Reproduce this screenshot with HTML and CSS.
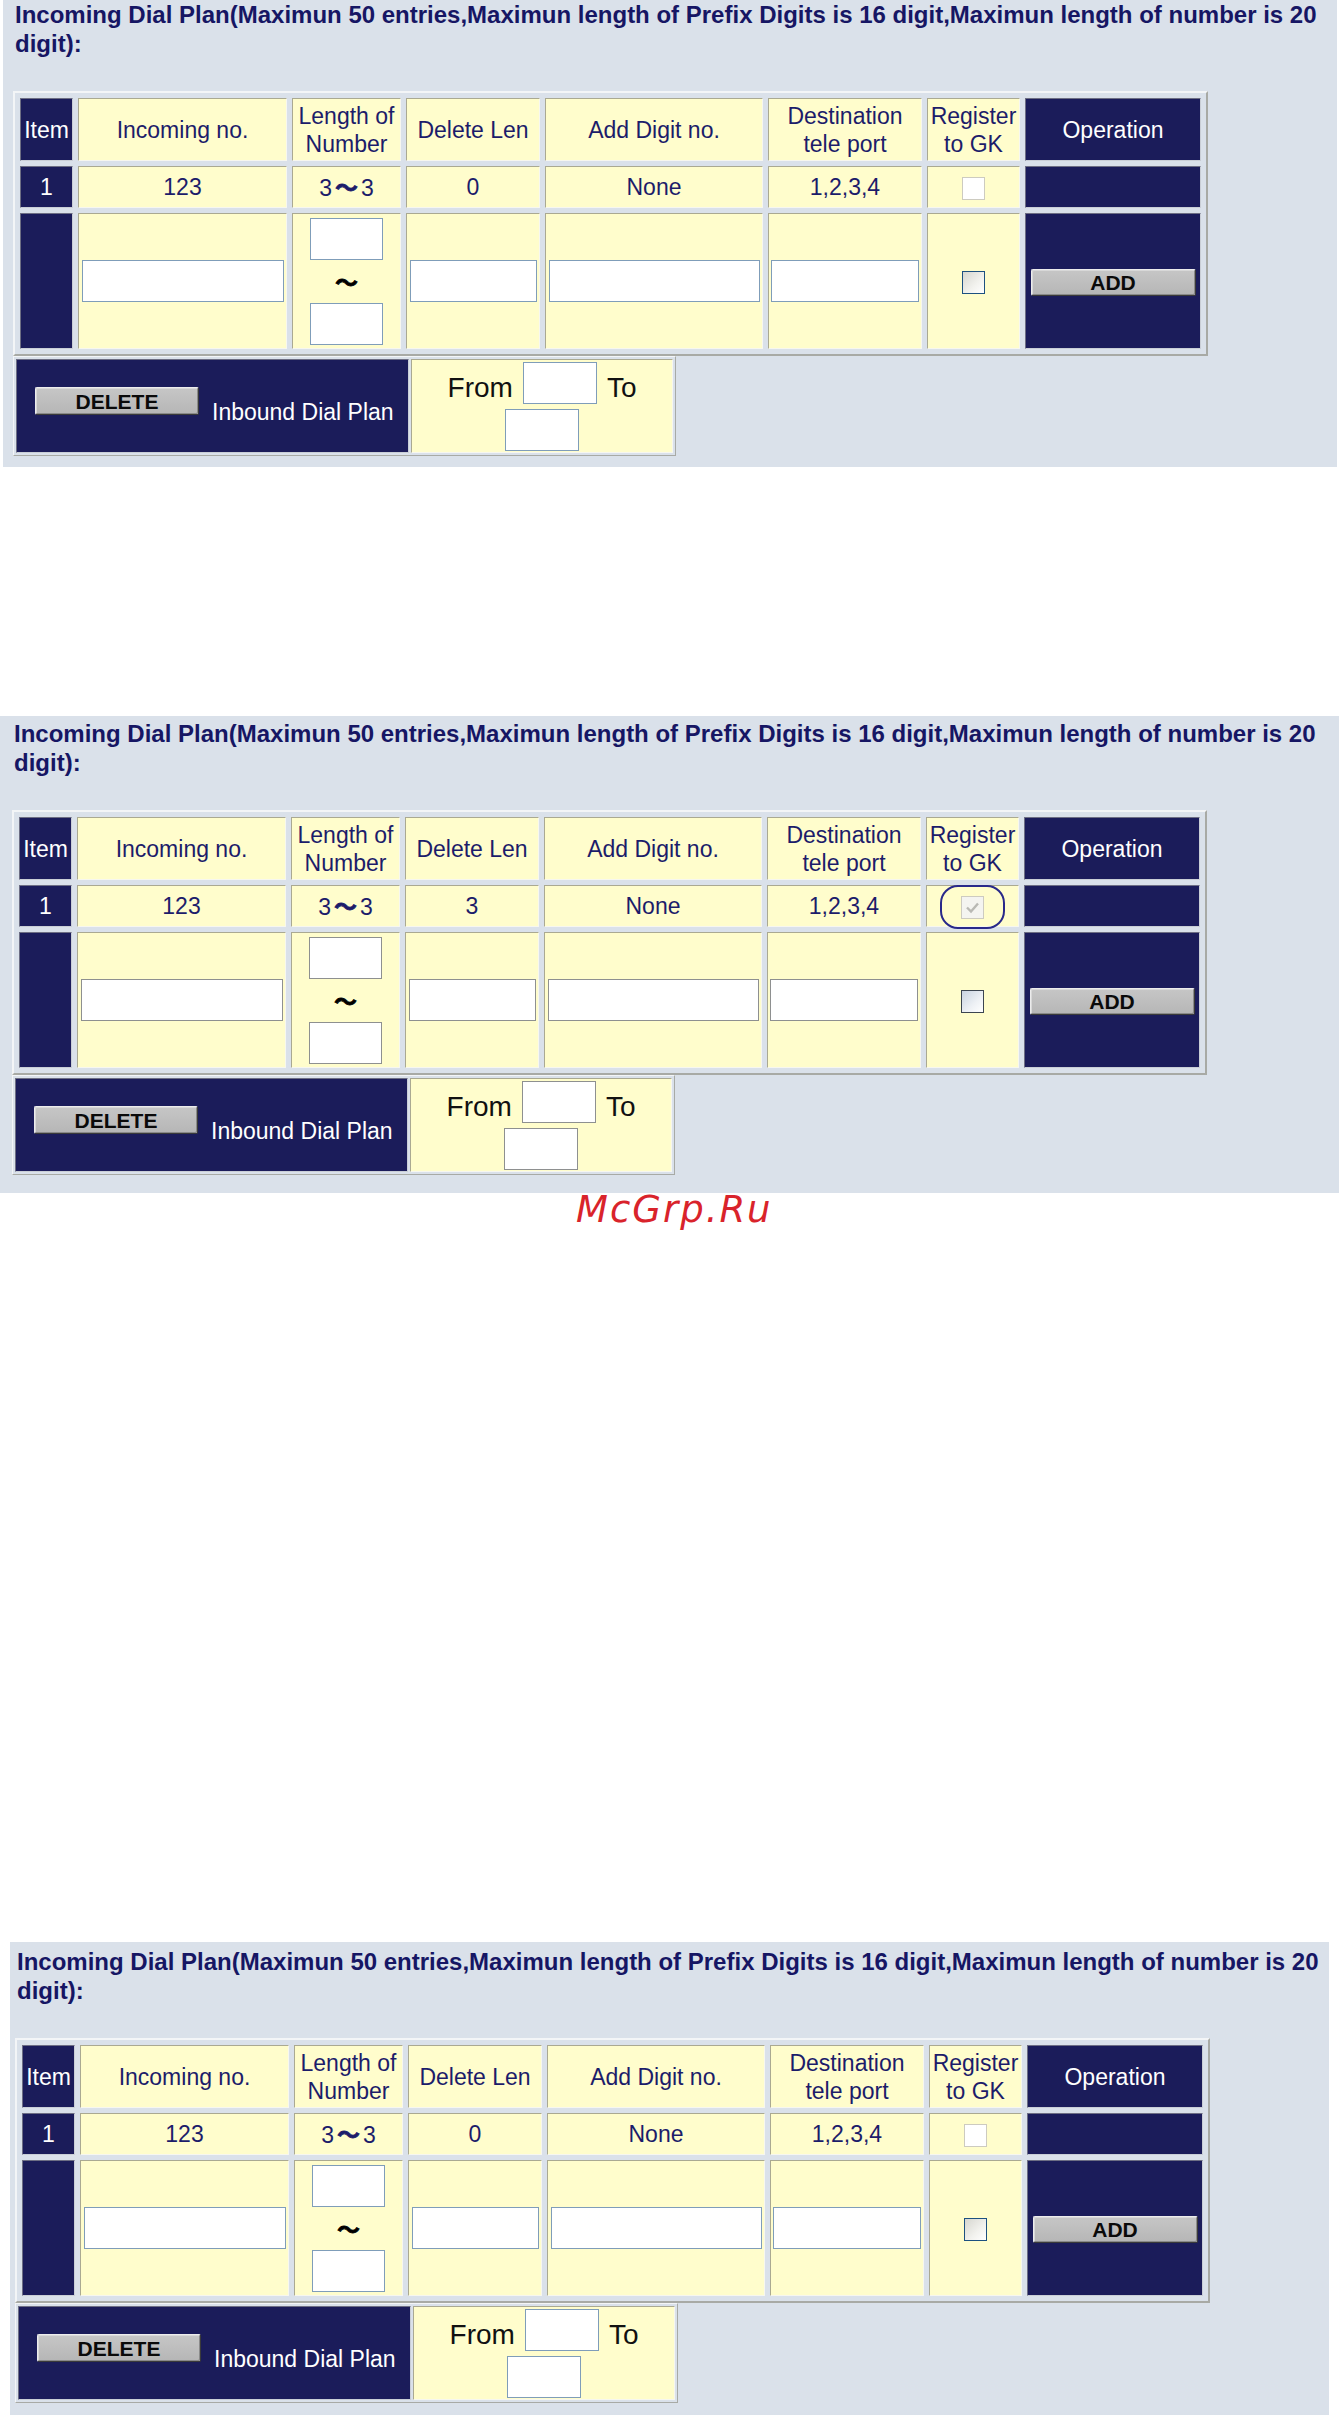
FILE: index.html
```html
<!DOCTYPE html>
<html lang="en">
<head>
<meta charset="utf-8">
<title>Incoming Dial Plan</title>
<link rel="stylesheet" href="styles.css">
</head>
<body>
<div class="page">

  <section class="panel panel--one">
    <h2 class="title">Incoming Dial Plan(Maximun 50 entries,Maximun length of Prefix Digits is 16 digit,Maximun length of number is 20<br>digit):</h2>
    <table class="plan">
      <tr class="row-head">
        <td class="cell cell--dark c-item">Item</td>
        <td class="cell c-in">Incoming no.</td>
        <td class="cell c-len">Length of Number</td>
        <td class="cell c-del">Delete Len</td>
        <td class="cell c-add">Add Digit no.</td>
        <td class="cell c-dst">Destination tele port</td>
        <td class="cell c-reg">Register to GK</td>
        <td class="cell cell--dark c-op">Operation</td>
      </tr>
      <tr class="row-entry">
        <td class="cell cell--dark">1</td>
        <td class="cell">123</td>
        <td class="cell">3<span class="wave">～</span>3</td>
        <td class="cell">0</td>
        <td class="cell">None</td>
        <td class="cell">1,2,3,4</td>
        <td class="cell"><span class="check check--off"></span></td>
        <td class="cell cell--dark"></td>
      </tr>
      <tr class="row-new">
        <td class="cell cell--dark"></td>
        <td class="cell"><input class="field field--in" type="text"></td>
        <td class="cell"><input class="field field--len" type="text"><div class="wave-sep">～</div><input class="field field--len" type="text"></td>
        <td class="cell"><input class="field field--del" type="text"></td>
        <td class="cell"><input class="field field--add" type="text"></td>
        <td class="cell"><input class="field field--dst" type="text"></td>
        <td class="cell"><span class="check check--new"></span></td>
        <td class="cell cell--dark"><button class="btn btn--add" type="button">ADD</button></td>
      </tr>
    </table>
    <table class="remove">
      <tr>
        <td class="cell cell--dark c-remove">
          <div class="remove-inner"><button class="btn btn--delete" type="button">DELETE</button><span class="remove-label">Inbound Dial Plan</span></div>
        </td>
        <td class="cell c-range">
          <div class="range-line"><span class="range-word">From</span><input class="field field--range" type="text"><span class="range-word">To</span></div>
          <div class="range-line range-line--second"><input class="field field--range" type="text"></div>
        </td>
      </tr>
    </table>
  </section>

  <section class="panel panel--two">
    <h2 class="title">Incoming Dial Plan(Maximun 50 entries,Maximun length of Prefix Digits is 16 digit,Maximun length of number is 20<br>digit):</h2>
    <table class="plan">
      <tr class="row-head">
        <td class="cell cell--dark c-item">Item</td>
        <td class="cell c-in">Incoming no.</td>
        <td class="cell c-len">Length of Number</td>
        <td class="cell c-del">Delete Len</td>
        <td class="cell c-add">Add Digit no.</td>
        <td class="cell c-dst">Destination tele port</td>
        <td class="cell c-reg">Register to GK</td>
        <td class="cell cell--dark c-op">Operation</td>
      </tr>
      <tr class="row-entry">
        <td class="cell cell--dark">1</td>
        <td class="cell">123</td>
        <td class="cell">3<span class="wave">～</span>3</td>
        <td class="cell">3</td>
        <td class="cell">None</td>
        <td class="cell">1,2,3,4</td>
        <td class="cell"><span class="ring"><span class="check check--on"><svg class="tick" viewBox="0 0 23 23" width="23" height="23"><path d="M6 11.5 L10 15.5 L17 7.5" fill="none" stroke="#b9b9b4" stroke-width="2.4"/></svg></span></span></td>
        <td class="cell cell--dark"></td>
      </tr>
      <tr class="row-new">
        <td class="cell cell--dark"></td>
        <td class="cell"><input class="field field--in" type="text"></td>
        <td class="cell"><input class="field field--len" type="text"><div class="wave-sep">～</div><input class="field field--len" type="text"></td>
        <td class="cell"><input class="field field--del" type="text"></td>
        <td class="cell"><input class="field field--add" type="text"></td>
        <td class="cell"><input class="field field--dst" type="text"></td>
        <td class="cell"><span class="check check--new"></span></td>
        <td class="cell cell--dark"><button class="btn btn--add" type="button">ADD</button></td>
      </tr>
    </table>
    <table class="remove">
      <tr>
        <td class="cell cell--dark c-remove">
          <div class="remove-inner"><button class="btn btn--delete" type="button">DELETE</button><span class="remove-label">Inbound Dial Plan</span></div>
        </td>
        <td class="cell c-range">
          <div class="range-line"><span class="range-word">From</span><input class="field field--range" type="text"><span class="range-word">To</span></div>
          <div class="range-line range-line--second"><input class="field field--range" type="text"></div>
        </td>
      </tr>
    </table>
  </section>

  <div class="watermark">McGrp.Ru</div>

  <section class="panel panel--three">
    <h2 class="title">Incoming Dial Plan(Maximun 50 entries,Maximun length of Prefix Digits is 16 digit,Maximun length of number is 20<br>digit):</h2>
    <table class="plan">
      <tr class="row-head">
        <td class="cell cell--dark c-item">Item</td>
        <td class="cell c-in">Incoming no.</td>
        <td class="cell c-len">Length of Number</td>
        <td class="cell c-del">Delete Len</td>
        <td class="cell c-add">Add Digit no.</td>
        <td class="cell c-dst">Destination tele port</td>
        <td class="cell c-reg">Register to GK</td>
        <td class="cell cell--dark c-op">Operation</td>
      </tr>
      <tr class="row-entry">
        <td class="cell cell--dark">1</td>
        <td class="cell">123</td>
        <td class="cell">3<span class="wave">～</span>3</td>
        <td class="cell">0</td>
        <td class="cell">None</td>
        <td class="cell">1,2,3,4</td>
        <td class="cell"><span class="check check--off"></span></td>
        <td class="cell cell--dark"></td>
      </tr>
      <tr class="row-new">
        <td class="cell cell--dark"></td>
        <td class="cell"><input class="field field--in" type="text"></td>
        <td class="cell"><input class="field field--len" type="text"><div class="wave-sep">～</div><input class="field field--len" type="text"></td>
        <td class="cell"><input class="field field--del" type="text"></td>
        <td class="cell"><input class="field field--add" type="text"></td>
        <td class="cell"><input class="field field--dst" type="text"></td>
        <td class="cell"><span class="check check--new"></span></td>
        <td class="cell cell--dark"><button class="btn btn--add" type="button">ADD</button></td>
      </tr>
    </table>
    <table class="remove">
      <tr>
        <td class="cell cell--dark c-remove">
          <div class="remove-inner"><button class="btn btn--delete" type="button">DELETE</button><span class="remove-label">Inbound Dial Plan</span></div>
        </td>
        <td class="cell c-range">
          <div class="range-line"><span class="range-word">From</span><input class="field field--range" type="text"><span class="range-word">To</span></div>
          <div class="range-line range-line--second"><input class="field field--range" type="text"></div>
        </td>
      </tr>
    </table>
  </section>

</div>
</body>
</html>
```

FILE: styles.css
```css
* {
  box-sizing: border-box;
}

html, body {
  margin: 0;
  padding: 0;
  background: #ffffff;
}

body {
  font-family: "Liberation Sans", Arial, sans-serif;
}

.page {
  width: 1339px;
}

/* ---------- panels ---------- */
.panel {
  background: #dae1ea;
  overflow: hidden;
}

.panel--one {
  margin-left: 3px;
  width: 1334px;
  height: 467px;
  padding: 0 0 0 10px;
}

.panel--two {
  margin-top: 249px;
  width: 1339px;
  height: 477px;
  padding: 3px 0 0 12px;
}

.panel--three {
  margin-top: 716px;
  margin-left: 10px;
  width: 1319px;
  height: 473px;
  padding: 5px 0 0 5px;
}

.title {
  margin: 0 0 33px 2px;
  font-size: 24px;
  line-height: 29px;
  font-weight: bold;
  color: #161664;
  white-space: nowrap;
}

/* ---------- tables ---------- */
.plan {
  border-collapse: separate;
  border-spacing: 5px;
  border: 2px solid;
  border-color: #f3f5f7 #a8aaa5 #a8aaa5 #f3f5f7;
  table-layout: fixed;
  width: 1195px;
  font-size: 23px;
  line-height: 28px;
  color: #1c1c6a;
}

.remove {
  border-collapse: separate;
  border-spacing: 2px;
  border: 1px solid;
  border-color: #f3f5f7 #a8aaa5 #a8aaa5 #f3f5f7;
  table-layout: fixed;
  width: 663px;
}

.cell {
  border: 1px solid;
  border-color: #aaa992 #f7f7ef #f7f7ef #aaa992;
  padding: 1px;
  text-align: center;
  vertical-align: middle;
  background: #fffdcc;
}

.cell--dark {
  background: #1b1c5a;
  color: #ffffff;
  border-color: #6d6e84 #c9ced6 #c9ced6 #6d6e84;
}

.c-item { width: 53px; }
.c-in   { width: 209px; }
.c-len  { width: 109px; }
.c-del  { width: 134px; }
.c-add  { width: 218px; }
.c-dst  { width: 154px; }
.c-reg  { width: 93px; }
.c-op   { width: 176px; }

.row-head .cell  { height: 63px; }
.row-entry .cell { height: 42px; }
.row-new .cell   { height: 136px; }

.wave {
  display: inline-block;
  margin: 0 3px;
  font-family: "Noto Sans CJK JP", "DejaVu Sans", sans-serif;
  font-weight: bold;
  font-size: 23px;
  -webkit-text-stroke: 0.8px currentColor;
}

.wave-sep {
  height: 43px;
  line-height: 43px;
  font-family: "Noto Sans CJK JP", "DejaVu Sans", sans-serif;
  font-weight: bold;
  font-size: 23px;
  color: #000000;
  -webkit-text-stroke: 0.8px currentColor;
}

/* ---------- inputs ---------- */
.field {
  display: inline-block;
  height: 42px;
  margin: 0;
  padding: 0;
  border: 1px solid #7f9db9;
  background: #ffffff;
  vertical-align: middle;
  font: 16px "Liberation Sans", Arial, sans-serif;
}

.panel--two .field {
  border-color: #8e9090;
}

.field--in    { width: 202px; }
.field--len   { display: block; width: 73px; margin: 0 auto; }
.field--del   { width: 127px; }
.field--add   { width: 211px; }
.field--dst   { width: 148px; }
.field--range { width: 74px; }

/* ---------- checkboxes ---------- */
.check {
  display: inline-block;
  width: 23px;
  height: 23px;
  vertical-align: middle;
}

.check--off {
  border: 1px solid #cdcbc0;
  background: #ffffff;
}

.check--on {
  border: 1px solid #cdcbc0;
  background: #f4f4f0;
}

.tick {
  display: block;
  margin: -1px;
}

.check--new {
  border: 1px solid #1d5180;
  background: linear-gradient(135deg, #d6d6d0 0%, #f2f2ee 60%, #ffffff 100%);
}

.panel--two .check--new {
  border-color: #3c4550;
  background: linear-gradient(135deg, #c9d3e0 0%, #eef1f5 60%, #ffffff 100%);
}

.ring {
  position: relative;
  display: inline-flex;
  vertical-align: middle;
}

.ring::after {
  content: "";
  position: absolute;
  left: -21px;
  right: -21px;
  top: -11px;
  bottom: -10px;
  border: 2px solid #29298a;
  border-radius: 18px;
}

/* ---------- buttons ---------- */
.btn {
  display: inline-block;
  margin: 0;
  padding: 0;
  font-family: "Liberation Sans", Arial, sans-serif;
  font-weight: bold;
  font-size: 21px;
  line-height: 1;
  color: #0a0a0a;
  background: linear-gradient(#c6c6c6, #b6b6b6);
  border: 1px solid;
  border-color: #ececec #3a3a3a #3a3a3a #ececec;
  border-radius: 2px;
  box-shadow: inset -1px -1px 0 #8a8a8a, inset 1px 1px 0 #d8d8d8;
}

.btn--add {
  width: 165px;
  height: 27px;
  vertical-align: middle;
}

.btn--delete {
  width: 164px;
  height: 28px;
  margin-bottom: 10px;
  flex: none;
}

/* ---------- delete row ---------- */
.c-remove {
  width: 393px;
  height: 94px;
  text-align: left;
}

.remove-inner {
  display: flex;
  align-items: center;
  padding-left: 17px;
}

.remove-label {
  margin-left: 13px;
  margin-top: 11px;
  font-size: 23px;
  line-height: 28px;
  color: #ffffff;
  white-space: nowrap;
}

.c-range {
  width: 262px;
  height: 94px;
}

.range-line {
  display: flex;
  justify-content: center;
  align-items: center;
  gap: 10px;
  height: 42px;
}

.range-line--second {
  margin-top: 5px;
}

.range-word {
  margin-top: 10px;
  font-size: 28px;
  line-height: 32px;
  color: #111111;
}

/* ---------- watermark ---------- */
.watermark {
  padding-left: 576px;
  font-family: "DejaVu Sans", Verdana, sans-serif;
  font-style: italic;
  font-size: 37px;
  line-height: 33px;
  letter-spacing: 2px;
  color: #d9232b;
}
```
